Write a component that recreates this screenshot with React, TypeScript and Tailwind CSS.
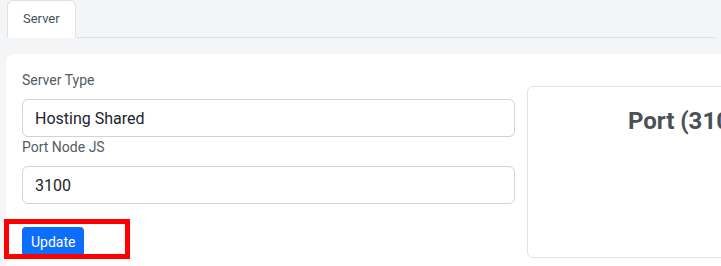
export default function App() {
  return (
    <div className="w-[721px] h-[266px] overflow-hidden bg-[#f4f5f7] px-[6px] font-['Roboto',sans-serif]">
      {/* tabs */}
      <div className="flex border-b border-[#dee2e6]">
        <div className="ml-px -mb-px rounded-t-[6px] border border-[#dee2e6] border-b-white bg-white px-[15px] py-[8px] text-[13px] leading-[20px] text-[#495057]">
          Server
        </div>
      </div>

      <div className="mt-4 w-[1100px] rounded-[8px] bg-white p-4">
        <div className="flex gap-[12px]">
          <div className="w-[493px] shrink-0">
            <label className="mb-2 block text-[14px] leading-[21px] text-[#555c63]">Server Type</label>
            <input
              readOnly
              value="Hosting Shared"
              className="block h-[38px] w-full rounded-[6px] border border-[#ced4da] px-3 text-[16px] text-[#212529] outline-none"
            />
            <label className="mb-2 block text-[14px] leading-[21px] text-[#555c63]">Port Node JS</label>
            <input
              readOnly
              value="3100"
              className="block h-[38px] w-full rounded-[6px] border border-[#ced4da] px-3 text-[16px] text-[#212529] outline-none"
            />
            <div className="relative mt-[23px]">
              <button className="flex h-[30px] items-center rounded-[4px] bg-[#0d6efd] px-[9px] text-[14px] text-white">
                Update
              </button>
              {/* highlight overlay */}
              <div className="pointer-events-none absolute left-[-18px] top-[-8px] h-[40px] w-[126px] border-[5px] border-[#ff0000]" />
            </div>
          </div>

          <div className="mt-[16px] h-[172px] w-[326px] shrink-0 rounded-[6px] border border-[#dee2e6] pt-[20px] text-center">
            <h4 className="text-[24px] font-bold leading-[1.2] text-[#495057]">Port (3100)</h4>
          </div>
        </div>
      </div>
    </div>
  );
}
